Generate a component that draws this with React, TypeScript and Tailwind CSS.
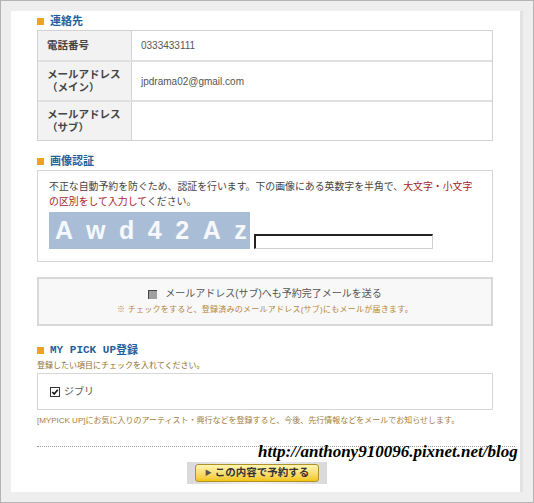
import React from "react";

const jp = "font-['Liberation_Sans','Noto_Sans_CJK_JP',sans-serif]";

const SectionTitle = ({ children, className = "" }: { children: React.ReactNode; className?: string }) => (
  <div className={`flex h-[13px] items-center gap-[6px] ${className}`}>
    <span className="h-[7px] w-[7px] bg-[#f2a21e]" />
    <span className="text-[11px] font-bold leading-none text-[#1f5f9b]">{children}</span>
  </div>
);

const rows = [
  { label: ["電話番号"], value: "0333433111", h: "h-[29px]" },
  { label: ["メールアドレス", "（メイン）"], value: "jpdrama02@gmail.com", h: "h-[40px]" },
  { label: ["メールアドレス", "（サブ）"], value: "", h: "h-[40px]" },
];

export default function App() {
  return (
    <div className={`h-[503px] w-[534px] border border-[#b4b4b4] bg-[#eeeeee] pl-[10px] pt-[10px] ${jp}`}>
      <div className="relative h-[481px] w-[512px] border-r-[3px] border-[#e2e2e2] bg-white pl-[26px]">
        <div className="w-[456px]">
          <SectionTitle className="pt-[4px] h-[17px]">連絡先</SectionTitle>

          <div className="mt-[2px] border border-[#d2d2d2]">
            {rows.map((r, i) => (
              <div key={i} className={`flex ${r.h} ${i > 0 ? "border-t-2 border-[#e0e0e0]" : ""}`}>
                <div className="flex w-[94px] flex-col justify-center border-r border-[#d2d2d2] bg-[#f2f2f2] pl-[9px] text-[10.5px] font-bold leading-[13px] text-[#444]">
                  {r.label.map((l) => (
                    <span key={l}>{l}</span>
                  ))}
                </div>
                <div className="flex items-center pl-[9px] text-[10px] text-[#555]">{r.value}</div>
              </div>
            ))}
          </div>

          <SectionTitle className="mt-[14px]">画像認証</SectionTitle>

          <div className="mt-[2px] h-[92px] border border-[#d6d6d6] px-[11px] pt-[8px]">
            <div className="text-[9.9px] leading-[15px] text-[#444]">
              <div className="whitespace-nowrap">
                不正な自動予約を防ぐため、認証を行います。下の画像にある英数字を半角で、
                <span className="text-[#a81d1d]">大文字・小文字</span>
              </div>
              <div className="whitespace-nowrap">
                <span className="text-[#a81d1d]">の区別をして入力して</span>ください。
              </div>
            </div>
            <div className="mt-[3px] flex items-end gap-[4px]">
              <div className="flex h-[37px] w-[201px] items-center bg-[#a9bed6] pl-[6px] font-['Liberation_Sans',sans-serif] text-[25px] font-bold tracking-[13.5px] text-[#f6f8fb]">
                Awd42Az
              </div>
              <div className="h-[15px] w-[179px] border-b border-l-2 border-r border-t-2 border-b-[#d0d0d0] border-l-[#222] border-r-[#d0d0d0] border-t-[#222]" />
            </div>
          </div>

          <div className="mt-[15px] flex h-[49px] flex-col items-center border-2 border-[#d8d8d8] bg-[#f8f8f8] pt-[8px]">
            <div className="flex items-center gap-[8px] text-[10px] leading-[14px] text-[#555]">
              <span className="h-[9px] w-[9px] border-l border-t border-l-[#444] border-t-[#444] bg-[#a0a0a0]" />
              <span>メールアドレス(サブ)へも予約完了メールを送る</span>
            </div>
            <div className="mt-[3px] text-[8px] leading-[12px] tracking-[0.25px] text-[#b5873a]">
              ※ チェックをすると、登録済みのメールアドレス(サブ)にもメールが届きます。
            </div>
          </div>

          <div className="mt-[18px] flex h-[13px] items-center gap-[6px]">
            <span className="h-[7px] w-[7px] bg-[#f2a21e]" />
            <span className="font-['Liberation_Mono',monospace] text-[11px] font-bold leading-none text-[#1f5f9b]">
              MY PICK UP
            </span>
            <span className="-ml-[6px] text-[11px] font-bold leading-none text-[#1f5f9b]">登録</span>
          </div>
          <div className="mt-[3px] h-[12px] text-[8px] leading-[12px] text-[#8d6e2f]">
            登録したい項目にチェックを入れてください。
          </div>

          <div className="mt-[1px] flex h-[37px] items-center border border-[#d6d6d6] pl-[12px]">
            <svg width="10" height="10" viewBox="0 0 10 10" className="mr-[4px]">
              <rect x="0.5" y="0.5" width="9" height="9" fill="#fff" stroke="#333" />
              <path d="M2.3 5 L4.2 7 L7.8 2.8" fill="none" stroke="#111" strokeWidth="1.6" />
            </svg>
            <span className="text-[10px] text-[#555]">ジブリ</span>
          </div>

          <div className="mt-[5px] text-[8px] leading-[12px] text-[#a57c3c]">
            [MYPICK UP]にお気に入りのアーティスト・興行などを登録すると、今後、先行情報などをメールでお知らせします。
          </div>

          <div className="mt-[19px] w-[478px] border-t border-dotted border-[#999]" />

          <div className="mt-[15px] flex justify-center pr-[16px]">
            <div className="flex h-[22px] w-[140px] items-center justify-center bg-gradient-to-r from-[#d9d9d9] via-[#f2f2f2] to-[#d9d9d9]">
              <button className="flex h-[18px] w-[124px] items-center justify-center gap-[3px] rounded-[3px] border border-[#b0902a] bg-gradient-to-b from-[#fff6b0] to-[#f3c600] text-[10.5px] font-bold text-[#333]">
                <span className="text-[7px] text-[#555]">▶</span>
                この内容で予約する
              </button>
            </div>
          </div>
        </div>

        <div className="absolute left-[247px] top-[432px] font-['Liberation_Serif',serif] text-[17px] font-bold italic leading-none text-black">
          http://anthony910096.pixnet.net/blog
        </div>
      </div>
    </div>
  );
}
